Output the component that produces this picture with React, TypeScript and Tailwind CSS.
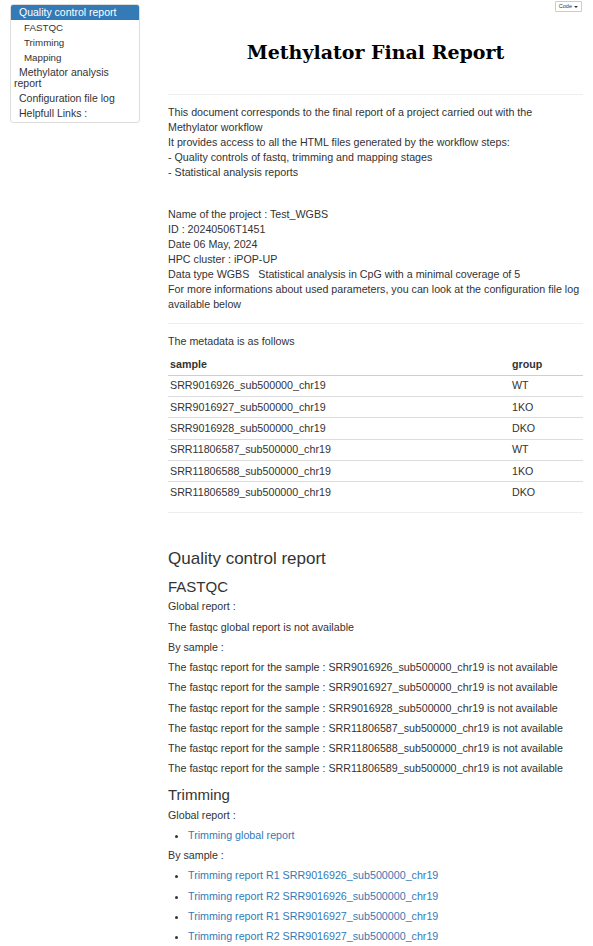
import React from 'react';

const samples = [
  { sample: 'SRR9016926_sub500000_chr19', group: 'WT' },
  { sample: 'SRR9016927_sub500000_chr19', group: '1KO' },
  { sample: 'SRR9016928_sub500000_chr19', group: 'DKO' },
  { sample: 'SRR11806587_sub500000_chr19', group: 'WT' },
  { sample: 'SRR11806588_sub500000_chr19', group: '1KO' },
  { sample: 'SRR11806589_sub500000_chr19', group: 'DKO' },
];

const trimmingLinks = [
  'Trimming report R1 SRR9016926_sub500000_chr19',
  'Trimming report R2 SRR9016926_sub500000_chr19',
  'Trimming report R1 SRR9016927_sub500000_chr19',
  'Trimming report R2 SRR9016927_sub500000_chr19',
];

const Toc: React.FC = () => (
  <div className="border border-[#dddddd] rounded-[3px] overflow-hidden text-[10.5px] leading-[11px] text-[#333333]">
    <div className="bg-[#337ab7] text-white pl-[4px] indent-[4px] py-[2px]">Quality control report</div>
    <div className="pl-[13px] py-[2px] text-[9.75px]">FASTQC</div>
    <div className="pl-[13px] py-[2px] text-[9.75px]">Trimming</div>
    <div className="pl-[13px] py-[2px] text-[9.75px]">Mapping</div>
    <div className="pl-[3px] indent-[5px] py-[2px]">Methylator analysis report</div>
    <div className="pl-[3px] indent-[5px] py-[2px]">Configuration file log</div>
    <div className="pl-[3px] indent-[5px] py-[2px] pb-[3px]">Helpfull Links :</div>
  </div>
);

const P: React.FC<{ children: React.ReactNode }> = ({ children }) => (
  <p className="mb-[5.25px]">{children}</p>
);

export default function App() {
  return (
    <div className="flex bg-white text-[#333333] text-[10.7px] leading-[15px] font-['Liberation_Sans',Arial,sans-serif] min-h-[946px]">
      <div className="w-[168px] shrink-0 pl-[10px] pr-[28px] pt-[4px]">
        <Toc />
      </div>

      <div className="w-[415px] shrink-0">
        <div className="h-[94px] flex flex-col">
          <div className="flex justify-end pt-[1px]">
            <div className="h-[11px] px-[3px] border border-[#cccccc] rounded-[1px] text-[5.5px] leading-[9px] text-[#333333] flex items-center gap-[2px] mr-[1px]">
              Code
              <span className="inline-block w-0 h-0 border-l-[2px] border-r-[2px] border-t-[2px] border-l-transparent border-r-transparent border-t-[#333333]" />
            </div>
          </div>
          <h1 className="mt-[27px] text-center font-bold text-[19px] leading-[26px] text-black font-['DejaVu_Serif',serif]">
            Methylator Final Report
          </h1>
        </div>
        <div className="border-t border-[#eeeeee]" />

        <div className="pt-[9.5px]">
          <p>This document corresponds to the final report of a project carried out with the Methylator workflow</p>
          <p>It provides access to all the HTML files generated by the workflow steps:</p>
          <p>- Quality controls of fastq, trimming and mapping stages</p>
          <p>- Statistical analysis reports</p>
        </div>

        <div className="pt-[27px]">
          <p>Name of the project : Test_WGBS</p>
          <p>ID : 20240506T1451</p>
          <p>Date 06 May, 2024</p>
          <p>HPC cluster : iPOP-UP</p>
          <p>Data type WGBS&nbsp;&nbsp; Statistical analysis in CpG with a minimal coverage of 5</p>
          <p>For more informations about used parameters, you can look at the configuration file log available below</p>
        </div>

        <div className="mt-[11px] border-t border-[#eeeeee]" />

        <p className="mt-[10px]">The metadata is as follows</p>
        <table className="w-full mt-[5px] border-collapse">
          <thead>
            <tr className="border-b border-[#cfcfcf]">
              <th className="text-left font-bold px-[2px] py-[3px]">sample</th>
              <th className="text-left font-bold px-[2px] py-[3px] w-[73px]">group</th>
            </tr>
          </thead>
          <tbody>
            {samples.map((s, i) => (
              <tr key={s.sample} className={i < samples.length - 1 ? 'border-b border-[#dddddd]' : ''}>
                <td className="px-[2px] py-[2.7px]">{s.sample}</td>
                <td className="px-[2px] py-[2.7px]">{s.group}</td>
              </tr>
            ))}
          </tbody>
        </table>

        <div className="mt-[9px] border-t border-[#eeeeee]" />

        <h1 className="mt-[36px] text-[17px] leading-[19px] font-normal">Quality control report</h1>
        <h2 className="mt-[11px] text-[15px] leading-[16.5px] font-normal">FASTQC</h2>
        <div className="mt-[4px]">
          <P>Global report :</P>
          <P>The fastqc global report is not available</P>
          <P>By sample :</P>
          {samples.map((s) => (
            <P key={s.sample}>The fastqc report for the sample : {s.sample} is not available</P>
          ))}
        </div>

        <h2 className="mt-[11px] text-[15px] leading-[16.5px] font-normal">Trimming</h2>
        <div className="mt-[4px]">
          <P>Global report :</P>
          <ul className="list-disc pl-[20px] mb-[5px]">
            <li className="mb-[5px]">
              <a className="text-[#337ab7]">Trimming global report</a>
            </li>
          </ul>
          <P>By sample :</P>
          <ul className="list-disc pl-[20px]">
            {trimmingLinks.map((t) => (
              <li key={t} className="mb-[5.25px]">
                <a className="text-[#337ab7]">{t}</a>
              </li>
            ))}
          </ul>
        </div>
      </div>
    </div>
  );
}
